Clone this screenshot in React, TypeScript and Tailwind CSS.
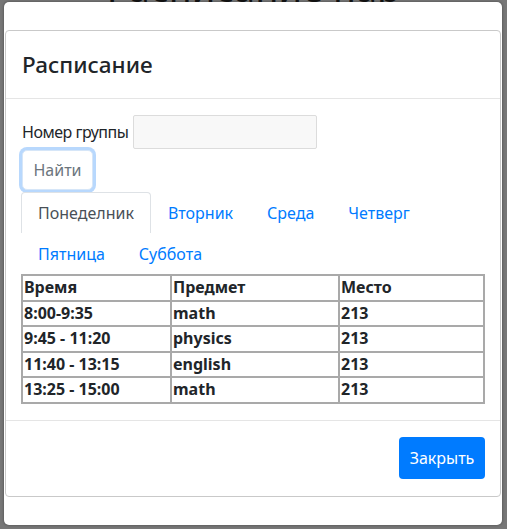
const rows = [
  { time: '8:00-9:35', subject: 'math', room: '213' },
  { time: '9:45 - 11:20', subject: 'physics', room: '213' },
  { time: '11:40 - 13:15', subject: 'english', room: '213' },
  { time: '13:25 - 15:00', subject: 'math', room: '213' },
]

const tabs = ['Понеделник', 'Вторник', 'Среда', 'Четверг', 'Пятница', 'Суббота']

export default function App() {
  return (
    <div
      className="h-[529px] w-[507px] overflow-hidden bg-[#777777] text-[#212529]"
      style={{ fontFamily: '"Noto Sans", "Open Sans", sans-serif' }}
    >
      {/* page heading behind the backdrop, only its lower edge peeks out */}
      <div className="h-[2px] overflow-hidden">
        <div className="-mt-[33px] text-center text-[38px] leading-[40px] text-[#111]">
          Расписание пар
        </div>
      </div>

      <div className="ml-[4px] h-[523px] w-[498px] rounded-[5px] bg-white px-[1px] pt-[28px] shadow-[0_0_3px_rgba(0,0,0,0.4)]">
        <div className="flex h-[467px] flex-col rounded-[4px] border border-[#c9c9c9]">
          {/* header */}
          <div className="flex h-[68px] items-center border-b border-[#e5e5e5] px-[16px]">
            <h4 className="pt-[2px] text-[22.5px] font-medium leading-none">Расписание</h4>
          </div>

          {/* body */}
          <div className="flex-1 px-[15px] pt-[16px]">
            <div className="flex items-center gap-[5px] pl-[1px]">
              <label className="text-[16px] tracking-[-0.5px]">Номер группы</label>
              <input
                type="text"
                className="h-[34px] w-[184px] rounded-[2px] border border-[#dcdcdc] bg-[#f8f8f8] outline-none"
              />
            </div>
            <button className="mt-[1px] ml-[1px] h-[40px] w-[71px] rounded-[5px] border border-[#d6e6f8] bg-white text-[16px] text-[#6c757d] ring-[3px] ring-[#b8d8fd]">
              Найти
            </button>

            <div className="mt-[2px] flex w-[464px] flex-wrap text-[16px]">
              {tabs.map((t, i) => (
                <div
                  key={t}
                  className={
                    i === 0
                      ? 'flex h-[41px] items-center rounded-t-[4px] border border-b-0 border-[#dee2e6] px-[16px] text-[#495057]'
                      : 'flex h-[41px] items-center border border-transparent px-[16px] text-[#007bff]'
                  }
                >
                  {t}
                </div>
              ))}
            </div>

            <table className="w-[464px] border-separate border-spacing-0 border border-[#a9a9a9] text-[16px] font-bold">
              <tbody>
                <tr>
                  <td className="w-[149px] border border-[#a9a9a9] px-[1px] leading-[23.5px]">Время</td>
                  <td className="w-[168px] border border-[#a9a9a9] px-[1px] leading-[23.5px]">Предмет</td>
                  <td className="border border-[#a9a9a9] px-[1px] leading-[23.5px]">Место</td>
                </tr>
                {rows.map((r) => (
                  <tr key={r.time}>
                    <td className="border border-[#a9a9a9] px-[1px] leading-[23.5px]">{r.time}</td>
                    <td className="border border-[#a9a9a9] px-[1px] leading-[23.5px]">{r.subject}</td>
                    <td className="border border-[#a9a9a9] px-[1px] leading-[23.5px]">{r.room}</td>
                  </tr>
                ))}
              </tbody>
            </table>
          </div>

          {/* footer */}
          <div className="flex h-[76px] items-start justify-end border-t border-[#e5e5e5] pr-[15px] pt-[16px]">
            <button className="h-[42px] w-[86px] rounded-[4px] bg-[#007bff] text-[16px] text-white">
              Закрыть
            </button>
          </div>
        </div>
      </div>
    </div>
  )
}
